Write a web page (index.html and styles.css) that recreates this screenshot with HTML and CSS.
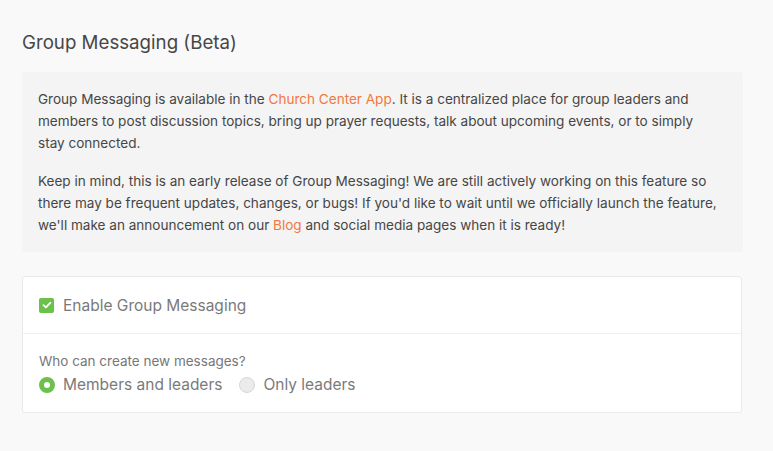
FILE: index.html
```html
<!DOCTYPE html>
<html lang="en">
<head>
<meta charset="utf-8">
<title>Group Messaging (Beta)</title>
<link rel="stylesheet" href="styles.css">
</head>
<body>
<main class="page">
  <h1 class="title">Group Messaging (Beta)</h1>
  <section class="info">
    <p>Group Messaging is available in the <a href="#" class="link">Church Center App</a>. It is a centralized place for group leaders and members to post discussion topics, bring up prayer requests, talk about upcoming events, or to simply stay connected.</p>
    <p>Keep in mind, this is an early release of Group Messaging! We are still actively working on this feature so there may be frequent updates, changes, or bugs! If you'd like to wait until we officially launch the feature, we'll make an announcement on our <a href="#" class="link">Blog</a> and social media pages when it is ready!</p>
  </section>
  <section class="card">
    <div class="card-head">
      <label class="check-row">
        <span class="checkbox">
          <svg width="10" height="8" viewBox="0 0 10 8"><path d="M1.5 4.2 L3.9 6.4 L8.5 1.6" fill="none" stroke="#fff" stroke-width="1.8" stroke-linecap="round" stroke-linejoin="round"/></svg>
        </span>
        <span class="check-label">Enable Group Messaging</span>
      </label>
    </div>
    <div class="card-body">
      <div class="question">Who can create new messages?</div>
      <div class="radios">
        <label class="radio-row"><span class="radio radio-on"></span><span class="radio-label">Members and leaders</span></label>
        <label class="radio-row"><span class="radio radio-off"></span><span class="radio-label">Only leaders</span></label>
      </div>
    </div>
  </section>
</main>
</body>
</html>
```
FILE: styles.css
```css
html, body {
  margin: 0;
  padding: 0;
  background: #f9f9f9;
}
body {
  font-family: Inter, "Noto Sans", sans-serif;
  color: #444;
}
.page {
  padding: 30px 30px 0 22px;
}
.title {
  margin: 0 0 16px 0;
  font-size: 18.7px;
  font-weight: 400;
  line-height: 26px;
  color: #474747;
}
.info {
  background: #f4f4f4;
  padding: 16px 22px 16px 16px;
  border-radius: 2px;
}
.info p {
  margin: 0 0 16px 0;
  font-size: 13.55px;
  line-height: 22px;
  color: #464646;
}
.info p:last-child {
  margin-bottom: 0;
}
.link {
  color: #f3783e;
  text-decoration: none;
}
.card {
  margin-top: 24px;
  background: #fff;
  border: 1px solid #e9e9e9;
  border-radius: 3px;
  margin-right: 1px;
}
.card-head {
  height: 56px;
  border-bottom: 1px solid #efefef;
  padding: 0 16px;
  display: flex;
  align-items: center;
}
.check-row, .radio-row {
  display: flex;
  align-items: center;
}
.checkbox {
  width: 15px;
  height: 15px;
  border-radius: 2px;
  background: #6cc04c;
  display: flex;
  align-items: center;
  justify-content: center;
  margin-right: 9px;
}
.check-label, .radio-label {
  font-size: 15.5px;
  color: #7a7a7a;
}
.card-body {
  padding: 18px 16px 15px 16px;
}
.question {
  font-size: 13.5px;
  line-height: 18px;
  color: #777;
}
.radios {
  display: flex;
  gap: 17px;
  margin-top: 3px;
  line-height: 24px;
}
.radio {
  width: 16px;
  height: 16px;
  border-radius: 50%;
  box-sizing: border-box;
  margin-right: 8px;
}
.radio-on {
  border: 5px solid #6cc04c;
  background: #fff;
}
.radio-off {
  border: 1px solid #d6d6d6;
  background: #ebebeb;
}
```
